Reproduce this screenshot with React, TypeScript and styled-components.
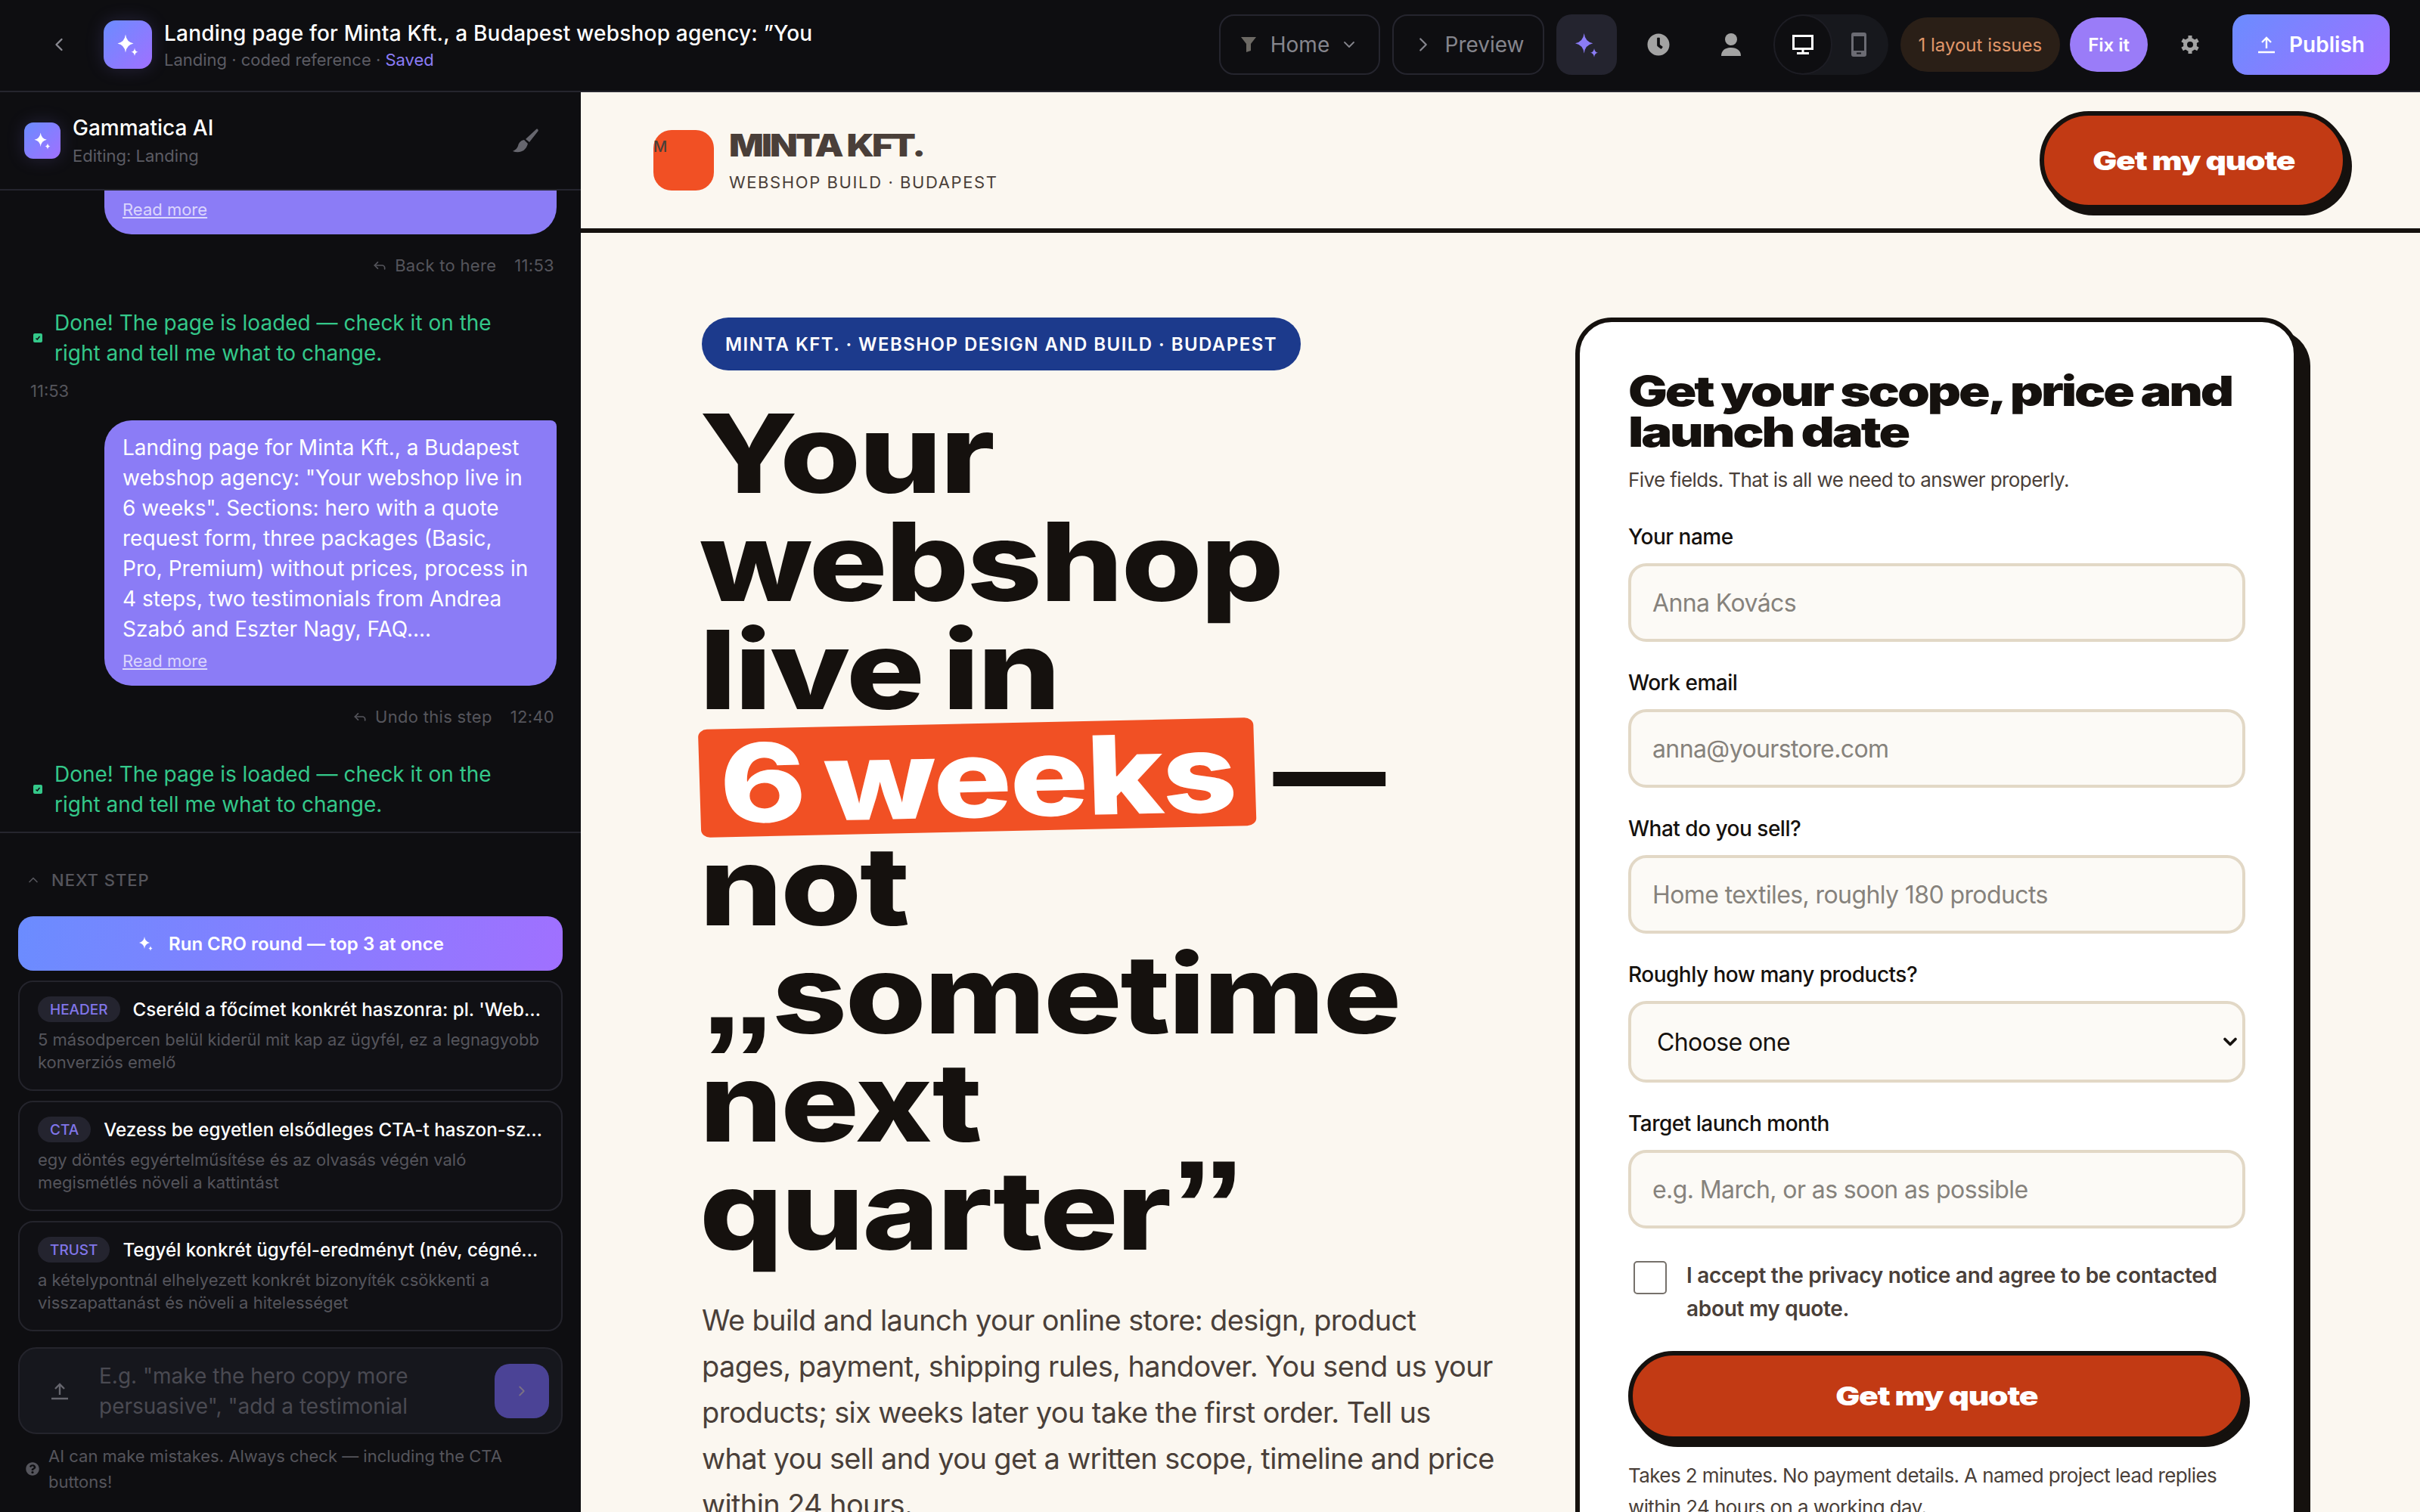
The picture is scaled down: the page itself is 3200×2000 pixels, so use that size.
import React from "react";
import styled, { createGlobalStyle } from "styled-components";
import { ChevronDown, ChevronLeft, ChevronRight, ChevronUp, Reply } from "lucide-react";
import { FaClock, FaQuestionCircle } from "react-icons/fa";

const GlobalStyle = createGlobalStyle`
  html, body {
    margin: 0;
    padding: 0;
    background: #0e0e11;
  }
  * {
    box-sizing: border-box;
  }
`;

const Shell = styled.div`
  width: 3200px;
  height: 2000px;
  display: flex;
  flex-direction: column;
  overflow: hidden;
  font-family: Inter, "Liberation Sans", sans-serif;
`;

const TopBar = styled.header`
  height: 122px;
  flex: none;
  display: flex;
  align-items: center;
  padding: 0 40px 2px 64px;
  background: #0e0e11;
  border-bottom: 2px solid #25252e;
  color: #fff;
`;

const BackIcon = styled(ChevronLeft)`
  width: 28px;
  height: 28px;
  margin-right: 45px;
  color: #8a8a92;
`;

const Spark = styled.div<{ $size: number }>`
  width: ${p => p.$size}px;
  height: ${p => p.$size}px;
  flex: none;
  display: flex;
  align-items: center;
  justify-content: center;
  border-radius: ${p => p.$size / 4}px;
  background: linear-gradient(135deg, #6b8cff, #a070ff);
  box-shadow: 0 0 24px rgba(139, 124, 246, 0.18);
`;

const TitleBlock = styled.div`
  margin: 2px 0 0 16px;
  flex: 1;
`;

const ProjectTitle = styled.div`
  font-size: 28px;
  font-weight: 500;
  line-height: 36px;
  letter-spacing: 0.2px;
`;

const ProjectSub = styled.div`
  font-size: 22px;
  line-height: 30px;
  margin-top: 2px;
  color: #5c5c64;
`;

const Saved = styled.span`
  color: #8b7cf6;
`;

const Actions = styled.div`
  display: flex;
  align-items: center;
`;

const GhostButton = styled.div<{ $w: number }>`
  width: ${p => p.$w}px;
  height: 80px;
  display: flex;
  align-items: center;
  justify-content: center;
  gap: 14px;
  margin-right: 16px;
  border: 2px solid #25252e;
  border-radius: 20px;
  font-size: 28px;
  color: #85858d;
`;

const SparkButton = styled.div`
  width: 80px;
  height: 80px;
  margin-right: 7px;
  display: flex;
  align-items: center;
  justify-content: center;
  border-radius: 20px;
  background: #24242f;
`;

const PlainIcon = styled.div<{ $w: number }>`
  width: ${p => p.$w}px;
  display: flex;
  justify-content: center;
  color: #a3a3a3;
  font-size: 30px;
`;

const DeviceToggle = styled.div`
  width: 150px;
  height: 80px;
  margin-left: 10px;
  padding: 2px 0;
  display: flex;
  border-radius: 40px;
  background: #17181d;
`;

const DeviceOption = styled.div<{ $on?: boolean }>`
  width: 74px;
  display: flex;
  align-items: center;
  justify-content: center;
  border-radius: 38px;
  background: ${p => (p.$on ? "#0e0e11" : "transparent")};
  box-shadow: ${p => (p.$on ? "0 0 0 2px #1d1d24" : "none")};
  color: ${p => (p.$on ? "#fff" : "#6b6b73")};
`;

const Pill = styled.div<{ $fix?: boolean }>`
  height: 72px;
  display: flex;
  align-items: center;
  margin-left: ${p => (p.$fix ? "13px" : "16px")};
  padding: 0 24px;
  border-radius: 36px;
  font-size: 24px;
  font-weight: ${p => (p.$fix ? 600 : 400)};
  color: ${p => (p.$fix ? "#fff" : "#e0976a")};
  background: ${p => (p.$fix ? "#9a7cf8" : "#2a1f17")};
`;

const PublishButton = styled.div`
  width: 208px;
  height: 80px;
  display: flex;
  align-items: center;
  justify-content: center;
  gap: 18px;
  border-radius: 20px;
  font-size: 28px;
  font-weight: 600;
  background: linear-gradient(135deg, #6b8cff, #a070ff);
`;

const Body = styled.div`
  flex: 1;
  display: flex;
  min-height: 0;
`;

const Sidebar = styled.aside`
  width: 768px;
  flex: none;
  display: flex;
  flex-direction: column;
  background: #0e0e11;
  color: #fff;
`;

const SideHead = styled.div`
  height: 130px;
  flex: none;
  display: flex;
  align-items: center;
  padding: 0 55px 0 32px;
  border-bottom: 2px solid #25252e;
`;

const SideName = styled.div`
  flex: 1;
  margin-left: 16px;
`;

const SideTitle = styled.div`
  font-size: 28px;
  font-weight: 500;
  line-height: 36px;
`;

const SideSub = styled.div`
  font-size: 22px;
  line-height: 30px;
  margin-top: 4px;
  color: #5c5c64;
`;

const Chat = styled.div`
  height: 850px;
  flex: none;
  overflow: hidden;
  padding: 0 32px 0 40px;
  border-bottom: 2px solid #25252e;
`;

const Bubble = styled.div<{ $clip?: boolean }>`
  width: 598px;
  margin-left: 98px;
  padding: ${p => (p.$clip ? "9px" : "16px")} 32px 17px 24px;
  border-radius: ${p => (p.$clip ? "0 0 36px 36px" : "36px 8px 36px 36px")};
  background: #8b7cf6;
  font-size: 28px;
  line-height: 40px;
`;

const ReadMore = styled.span<{ $first?: boolean }>`
  display: block;
  margin-top: ${p => (p.$first ? "0" : "6px")};
  font-size: 22px;
  line-height: 32px;
  text-decoration: underline;
  color: rgba(255, 255, 255, 0.7);
`;

const MetaRow = styled.div`
  width: 693px;
  height: 32px;
  margin-top: 25px;
  display: flex;
  align-items: center;
  justify-content: flex-end;
  gap: 10px;
  font-size: 22px;
  letter-spacing: 0.3px;
  color: #55555c;
`;

const MetaTime = styled.span`
  margin-left: 14px;
`;

const Done = styled.div`
  margin-top: 40px;
  display: flex;
  align-items: center;
  gap: 16px;
  font-size: 28px;
  line-height: 40px;
  color: #34c88a;
`;

const DoneMark = styled.span`
  width: 12px;
  height: 12px;
  flex: none;
  margin-left: 4px;
  display: flex;
  border-radius: 2px;
  background: #34c88a;
`;

const ChatTime = styled.div`
  margin-top: 14px;
  margin-bottom: 23px;
  font-size: 22px;
  line-height: 32px;
  color: #55555c;
`;

const Dock = styled.div`
  flex: 1;
  padding: 0 24px;
`;

const NextStep = styled.div`
  height: 110px;
  display: flex;
  align-items: center;
  gap: 14px;
  padding: 14px 0 0 10px;
  font-size: 22px;
  font-weight: 500;
  letter-spacing: 1px;
  color: #55555c;
`;

const RunButton = styled.div`
  height: 72px;
  display: flex;
  align-items: center;
  justify-content: center;
  gap: 18px;
  border-radius: 20px;
  font-size: 24px;
  font-weight: 600;
  background: linear-gradient(100deg, #6b8cff, #a070ff);
`;

const Card = styled.div`
  height: 146px;
  margin-top: 13px;
  padding: 16px 24px 0;
  border: 2px solid #24242c;
  border-radius: 20px;
  background: #101014;
`;

const CardHead = styled.div`
  height: 40px;
  display: flex;
  align-items: center;
  gap: 17px;
`;

const Badge = styled.span`
  flex: none;
  height: 34px;
  display: flex;
  align-items: center;
  padding: 0 16px;
  border-radius: 17px;
  background: #24242f;
  color: #8176ea;
  font-size: 19px;
  font-weight: 500;
`;

const CardTitle = styled.span`
  font-size: 24.2px;
  font-weight: 500;
  white-space: nowrap;
  overflow: hidden;
  text-overflow: ellipsis;
`;

const CardText = styled.div`
  margin-top: 5px;
  font-size: 22px;
  line-height: 30px;
  color: #55555c;
`;

const Composer = styled.div`
  height: 115px;
  margin-top: 21px;
  display: flex;
  align-items: center;
  padding: 0 16px 0 41px;
  border: 2px solid #24242c;
  border-radius: 24px;
  background: #16171d;
  color: #66666e;
`;

const Placeholder = styled.div`
  flex: 1;
  margin-left: 40px;
  font-size: 28px;
  line-height: 40px;
  color: #4a4a52;
`;

const SendButton = styled.div`
  width: 72px;
  height: 72px;
  display: flex;
  align-items: center;
  justify-content: center;
  border-radius: 20px;
  background: #4b4396;
  color: #7b7284;
`;

const Disclaimer = styled.div`
  margin-top: 12px;
  display: flex;
  align-items: center;
  gap: 12px;
  padding-left: 10px;
  font-size: 22px;
  line-height: 34px;
  color: #55555c;
`;

const HelpIcon = styled(FaQuestionCircle)`
  flex: none;
  width: 18px;
  height: 18px;
`;

const Page = styled.main`
  flex: 1;
  overflow: hidden;
  background: #fbf7f0;
  color: #15110e;
`;

const SiteHead = styled.div`
  height: 186px;
  display: flex;
  align-items: center;
  justify-content: space-between;
  padding: 0 96px;
  border-bottom: 6px solid #15110e;
`;

const Brand = styled.div`
  display: flex;
  align-items: center;
  gap: 20px;
`;

const BrandMark = styled.div`
  width: 80px;
  height: 80px;
  border-radius: 24px;
  background: #f15024;
  font-size: 20px;
  font-weight: 500;
  line-height: 44px;
  color: #4a3f39;
`;

const BrandName = styled.div`
  font-weight: 900;
  font-size: 41px;
  line-height: 46px;
  letter-spacing: -2.5px;
  color: #4a3f39;
  transform: scaleX(1.17);
  transform-origin: left;
`;

const BrandSub = styled.div`
  margin-top: 12px;
  font-size: 22px;
  line-height: 28px;
  letter-spacing: 1.6px;
  color: #4a3f39;
`;

const QuoteButton = styled.div<{ $wide?: boolean }>`
  height: ${p => (p.$wide ? "119px" : "130px")};
  width: ${p => (p.$wide ? "816px" : "407px")};
  margin-top: ${p => (p.$wide ? "34px" : "0")};
  display: flex;
  align-items: center;
  justify-content: center;
  border: 6px solid #15110e;
  border-radius: 65px;
  background: #c23a14;
  box-shadow: 6px 8px 0 #15110e;
  color: #fff;
`;

const QuoteLabel = styled.span`
  font-weight: 900;
  font-size: 34px;
  letter-spacing: -1px;
  transform: scaleX(1.25);
`;

const Hero = styled.div`
  display: grid;
  grid-template-columns: 1fr 956px;
  column-gap: 68px;
  padding: 112px 161px 0 160px;
`;

const Eyebrow = styled.div`
  width: 792px;
  height: 70px;
  display: flex;
  align-items: center;
  justify-content: center;
  border-radius: 35px;
  background: #1c3a8c;
  color: #fff;
  font-size: 24px;
  font-weight: 600;
  letter-spacing: 1.45px;
`;

const Headline = styled.h1`
  margin: 38px 0 0 -3px;
  font-weight: 800;
  font-size: 144px;
  line-height: 143px;
  letter-spacing: -2px;
  word-spacing: -8px;
  color: #15110e;
`;

const HeadLine = styled.span`
  display: block;
  white-space: nowrap;
  transform: scaleX(1.2);
  transform-origin: left;
`;

const Highlight = styled.span`
  display: inline-block;
  margin-right: 20px;
  padding: 0 22px;
  border-radius: 10px;
  background: #f15024;
  color: #fff;
  transform: rotate(-1.5deg);
`;

const Dash = styled.span`
  display: inline-block;
  transform: translateY(-8px) scaleX(0.86);
  transform-origin: left;
`;

const CurlyQuote = styled.span`
  font-family: "Liberation Sans", sans-serif;
  font-weight: 700;
  font-size: 168px;
  line-height: 0;
  letter-spacing: -4px;
`;

const Lead = styled.p`
  width: 1048px;
  margin: 44px 0 0;
  font-size: 38px;
  line-height: 61px;
  letter-spacing: -0.63px;
  color: #4a3f39;
`;

const FormCard = styled.form`
  width: 956px;
  height: 1700px;
  padding: 64px;
  border: 6px solid #15110e;
  border-radius: 48px;
  background: #fff;
  box-shadow: 16px 16px 0 #15110e;
`;

const FormTitle = styled.h2`
  margin: 0;
  font-weight: 900;
  font-size: 55px;
  line-height: 54px;
  letter-spacing: -2.5px;
`;

const FormTitleLine = styled.span`
  display: block;
  white-space: nowrap;
  transform: scaleX(1.25);
  transform-origin: left;
`;

const FormSub = styled.p`
  margin: 19px 0 0;
  font-size: 26px;
  line-height: 36px;
  letter-spacing: -0.6px;
  color: #4a3f39;
`;

const Label = styled.label<{ $first?: boolean }>`
  display: block;
  margin-top: ${p => (p.$first ? "39px" : "36px")};
  margin-bottom: 17px;
  font-size: 28px;
  font-weight: 500;
  line-height: 36px;
  letter-spacing: -0.5px;
`;

const Input = styled.input`
  display: block;
  width: 100%;
  height: 104px;
  padding: 0 28px;
  border: 4px solid #e2d8c6;
  border-radius: 24px;
  background: #fcfaf6;
  font-family: inherit;
  font-size: 32px;
  letter-spacing: -0.6px;
  &::placeholder {
    color: #86827c;
  }
`;

const SelectWrap = styled.div`
  position: relative;
  color: #15110e;
`;

const SelectBox = styled.select`
  display: block;
  width: 100%;
  height: 108px;
  padding: 0 34px;
  appearance: none;
  border: 4px solid #e2d8c6;
  border-radius: 24px;
  background: #fcfaf6;
  font-family: inherit;
  font-size: 32px;
  letter-spacing: -0.6px;
  color: #15110e;
`;

const SelectArrow = styled(ChevronDown)`
  position: absolute;
  top: 40px;
  right: 6px;
  width: 28px;
  height: 28px;
  stroke-width: 3.2px;
`;

const Consent = styled.div`
  margin-top: 40px;
  display: flex;
  gap: 26px;
  padding-left: 7px;
  font-size: 28px;
  font-weight: 600;
  line-height: 44px;
  letter-spacing: -0.3px;
  color: #4a3f39;
`;

const Check = styled.span`
  width: 44px;
  height: 44px;
  flex: none;
  margin-top: 3px;
  border: 2px solid #76716b;
  border-radius: 5px;
  background: #fff;
`;

const FormNote = styled.p`
  margin: 25px 0 0;
  font-size: 26px;
  line-height: 42px;
  letter-spacing: -0.6px;
  color: #4a3f39;
`;

const SparkGlyph: React.FC<{ size: number; color?: string }> = ({ size, color = "#fff" }) => (
  <svg width={size} height={size} viewBox="0 0 24 24" fill={color}>
    <path d="M10 3Q10.800 9.700 17 11 10.800 12.300 10 19 9.200 12.300 3 11 9.200 9.700 10 3z" />
    <path d="M18 15Q18.400 18.100 21 18.500 18.400 18.900 18 22 17.600 18.900 15 18.500 17.600 18.100 18 15z" />
  </svg>
);

const UploadGlyph: React.FC<{ size: number }> = ({ size }) => (
  <svg width={size} height={size} viewBox="0 0 24 24" fill="none" stroke="currentColor" strokeWidth="2.4">
    <path d="M12 17V3M6 9l6-6 6 6M1 22h22" />
  </svg>
);

const FunnelGlyph = () => (
  <svg width="26" height="20" viewBox="0 0 26 20" fill="#6c6964">
    <path d="M1 0h20l-7 9v9l-6 2V9z" />
  </svg>
);

const PersonGlyph = () => (
  <svg width="28" height="30" viewBox="0 0 28 30" fill="currentColor">
    <circle cx="14" cy="8" r="8" />
    <path d="M1 30c0-7 5-11 13-11s13 4 13 11z" />
  </svg>
);

const MonitorGlyph = () => (
  <svg width="28" height="26" viewBox="0 0 28 26" fill="none" stroke="currentColor" strokeWidth="3">
    <rect x="1.500" y="1.500" width="25" height="17" />
    <path d="M14 19v4M6 24.500h16" />
  </svg>
);

const PhoneGlyph = () => (
  <svg width="20" height="32" viewBox="0 0 20 32" fill="currentColor">
    <path
      fillRule="evenodd"
      d="M3 0h14a3 3 0 0 1 3 3v26a3 3 0 0 1-3 3H3a3 3 0 0 1-3-3V3a3 3 0 0 1 3-3zM3 5v19h14V5zM7 26.500v2h6v-2z"
    />
  </svg>
);

const GearGlyph = () => (
  <svg width="26" height="26" viewBox="0 0 26 26" fill="none" stroke="currentColor">
    <circle cx="13" cy="13" r="6.500" strokeWidth="5" />
    <path
      d="M13 1v5M13 20v5M2.600 7l4.300 2.500M19.100 16.500l4.300 2.500M2.600 19l4.300-2.500M19.100 9.500L23.400 7"
      strokeWidth="5"
    />
  </svg>
);

const BrushGlyph = () => (
  <svg width="36" height="32" viewBox="0 0 36 32" fill="#66666e">
    <path d="M34 1c1 1 1 2 0 3L23 18l-5-4L31 2c1-1 2-2 3-1z" />
    <path d="M16 15c-5 1-7 4-8 8-1 3-3 5-7 7 8 3 17 1 20-10z" />
  </svg>
);

const TickGlyph = () => (
  <svg width="12" height="12" viewBox="0 0 12 12" fill="none" stroke="#0e0e11" strokeWidth="1.500">
    <path d="M3.500 6.500l1.800 1.500 3.200-4" />
  </svg>
);

const suggestions = [
  {
    tag: "HEADER",
    title: "Cseréld a főcímet konkrét haszonra: pl. 'Webshop élesben 6 hét alatt'",
    text: "5 másodpercen belül kiderül mit kap az ügyfél, ez a legnagyobb konverziós emelő"
  },
  {
    tag: "CTA",
    title: "Vezess be egyetlen elsődleges CTA-t haszon-szöveggel a teljes oldalon",
    text: "egy döntés egyértelműsítése és az olvasás végén való megismétlés növeli a kattintást"
  },
  {
    tag: "TRUST",
    title: "Tegyél konkrét ügyfél-eredményt (név, cégnév, szám) a hős alá",
    text: "a kételypontnál elhelyezett konkrét bizonyíték csökkenti a visszapattanást és növeli a hitelességet"
  }
];

const DoneMessage = () => (
  <Done>
    <DoneMark>
      <TickGlyph />
    </DoneMark>
    <span>
      Done! The page is loaded — check it on the
      <br />
      right and tell me what to change.
    </span>
  </Done>
);

const App: React.FC = () => (
  <Shell>
    <GlobalStyle />
    <TopBar>
      <BackIcon />
      <Spark $size={64}>
        <SparkGlyph size={36} />
      </Spark>
      <TitleBlock>
        <ProjectTitle>Landing page for Minta Kft., a Budapest webshop agency: ”You</ProjectTitle>
        <ProjectSub>
          Landing · coded reference · <Saved>Saved</Saved>
        </ProjectSub>
      </TitleBlock>
      <Actions>
        <GhostButton $w={213}>
          <FunnelGlyph />
          Home
          <ChevronDown size={24} strokeWidth={1.8} />
        </GhostButton>
        <GhostButton $w={201}>
          <ChevronRight size={30} strokeWidth={1.8} />
          Preview
        </GhostButton>
        <SparkButton>
          <SparkGlyph size={40} color="#8b7cf6" />
        </SparkButton>
        <PlainIcon $w={96}>
          <FaClock />
        </PlainIcon>
        <PlainIcon $w={96}>
          <PersonGlyph />
        </PlainIcon>
        <DeviceToggle>
          <DeviceOption $on>
            <MonitorGlyph />
          </DeviceOption>
          <DeviceOption>
            <PhoneGlyph />
          </DeviceOption>
        </DeviceToggle>
        <Pill>1 layout issues</Pill>
        <Pill $fix>Fix it</Pill>
        <PlainIcon $w={112}>
          <GearGlyph />
        </PlainIcon>
        <PublishButton>
          <UploadGlyph size={24} />
          Publish
        </PublishButton>
      </Actions>
    </TopBar>
    <Body>
      <Sidebar>
        <SideHead>
          <Spark $size={48}>
            <SparkGlyph size={28} />
          </Spark>
          <SideName>
            <SideTitle>Gammatica AI</SideTitle>
            <SideSub>Editing: Landing</SideSub>
          </SideName>
          <BrushGlyph />
        </SideHead>
        <Chat>
          <Bubble $clip>
            <ReadMore $first>Read more</ReadMore>
          </Bubble>
          <MetaRow>
            <Reply size={20} />
            Back to here
            <MetaTime>11:53</MetaTime>
          </MetaRow>
          <DoneMessage />
          <ChatTime>11:53</ChatTime>
          <Bubble>
            Landing page for Minta Kft., a Budapest webshop agency: "Your webshop live in 6 weeks". Sections: hero with a
            quote request form, three packages (Basic, Pro, Premium) without prices, process in 4 steps, two
            testimonials from Andrea Szabó and Eszter Nagy, FAQ....
            <ReadMore>Read more</ReadMore>
          </Bubble>
          <MetaRow>
            <Reply size={20} />
            Undo this step
            <MetaTime>12:40</MetaTime>
          </MetaRow>
          <DoneMessage />
        </Chat>
        <Dock>
          <NextStep>
            <ChevronUp size={20} />
            NEXT STEP
          </NextStep>
          <RunButton>
            <SparkGlyph size={24} />
            Run CRO round — top 3 at once
          </RunButton>
          {suggestions.map(s => (
            <Card key={s.tag}>
              <CardHead>
                <Badge>{s.tag}</Badge>
                <CardTitle>{s.title}</CardTitle>
              </CardHead>
              <CardText>{s.text}</CardText>
            </Card>
          ))}
          <Composer>
            <UploadGlyph size={24} />
            <Placeholder>E.g. "make the hero copy more persuasive", "add a testimonial</Placeholder>
            <SendButton>
              <ChevronRight size={22} />
            </SendButton>
          </Composer>
          <Disclaimer>
            <HelpIcon />
            <span>AI can make mistakes. Always check — including the CTA buttons!</span>
          </Disclaimer>
        </Dock>
      </Sidebar>
      <Page>
        <SiteHead>
          <Brand>
            <BrandMark>M</BrandMark>
            <div>
              <BrandName>MINTA KFT.</BrandName>
              <BrandSub>WEBSHOP BUILD · BUDAPEST</BrandSub>
            </div>
          </Brand>
          <QuoteButton>
            <QuoteLabel>Get my quote</QuoteLabel>
          </QuoteButton>
        </SiteHead>
        <Hero>
          <div>
            <Eyebrow>MINTA KFT. · WEBSHOP DESIGN AND BUILD · BUDAPEST</Eyebrow>
            <Headline>
              <HeadLine>Your</HeadLine>
              <HeadLine>webshop</HeadLine>
              <HeadLine>live in</HeadLine>
              <HeadLine>
                <Highlight>6 weeks</Highlight>
                <Dash>—</Dash>
              </HeadLine>
              <HeadLine>not</HeadLine>
              <HeadLine>
                <CurlyQuote>„</CurlyQuote>sometime
              </HeadLine>
              <HeadLine>next</HeadLine>
              <HeadLine>
                quarter<CurlyQuote>”</CurlyQuote>
              </HeadLine>
            </Headline>
            <Lead>
              We build and launch your online store: design, product pages, payment, shipping rules, handover. You send
              us your products; six weeks later you take the first order. Tell us what you sell and you get a written
              scope, timeline and price within 24 hours.
            </Lead>
          </div>
          <FormCard>
            <FormTitle>
              <FormTitleLine>Get your scope, price and</FormTitleLine>
              <FormTitleLine>launch date</FormTitleLine>
            </FormTitle>
            <FormSub>Five fields. That is all we need to answer properly.</FormSub>
            <Label $first>Your name</Label>
            <Input placeholder="Anna Kovács" />
            <Label>Work email</Label>
            <Input placeholder="anna@yourstore.com" />
            <Label>What do you sell?</Label>
            <Input placeholder="Home textiles, roughly 180 products" />
            <Label>Roughly how many products?</Label>
            <SelectWrap>
              <SelectBox defaultValue="">
                <option value="">Choose one</option>
              </SelectBox>
              <SelectArrow />
            </SelectWrap>
            <Label>Target launch month</Label>
            <Input placeholder="e.g. March, or as soon as possible" />
            <Consent>
              <Check />
              <span>I accept the privacy notice and agree to be contacted about my quote.</span>
            </Consent>
            <QuoteButton $wide>
              <QuoteLabel>Get my quote</QuoteLabel>
            </QuoteButton>
            <FormNote>Takes 2 minutes. No payment details. A named project lead replies within 24 hours on a working day.</FormNote>
          </FormCard>
        </Hero>
      </Page>
    </Body>
  </Shell>
);

export default App;
